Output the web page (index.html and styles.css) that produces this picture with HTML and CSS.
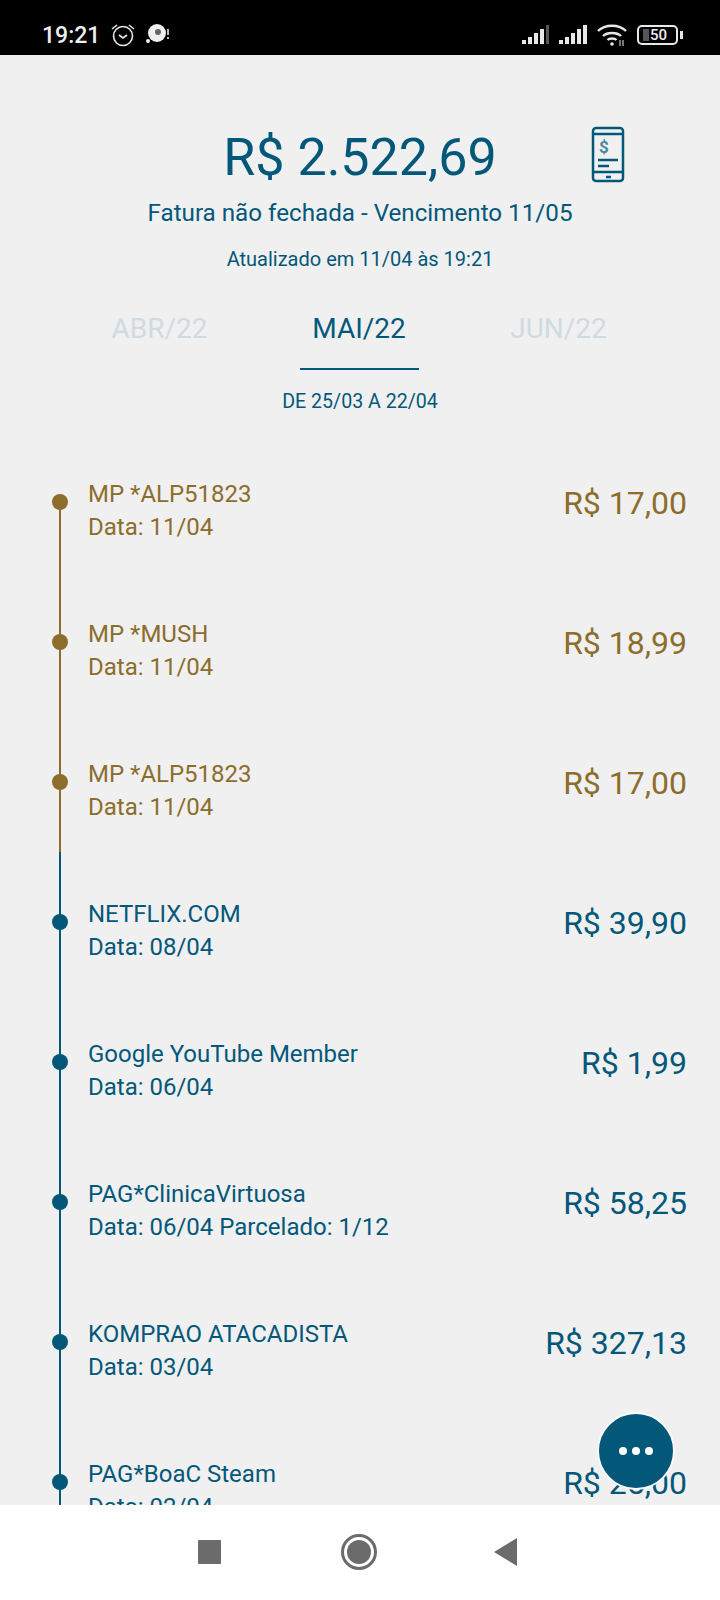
FILE: index.html
```html
<!DOCTYPE html>
<html>
<head>
    <title>Fatura</title>
    <meta name="viewport" content="width=device-width, initial-scale=1.0">
    <link rel="stylesheet" href="styles.css">
</head>
<body>
    <div class="status-bar">
        <div class="status-left">
            <span class="clock">19:21</span>
            <svg class="ico-alarm" width="24" height="26" viewBox="0 0 24 26" fill="none" stroke="#e8e8e8" stroke-width="1.6">
                <circle cx="12" cy="14" r="9.500"/>
                <path d="M8 13l4 3 4-3"/>
                <path d="M1 7l5-4M23 7l-5-4"/>
            </svg>
            <svg class="ico-disc" width="26" height="24" viewBox="0 0 26 24">
                <circle cx="12" cy="10" r="9" fill="#f0f0f0"/>
                <circle cx="13" cy="9" r="3" fill="#666"/>
                <circle cx="3" cy="18" r="2" fill="#f0f0f0"/>
                <path d="M22 6h2v6h-2zM22 14h2v2h-2z" fill="#bbb"/>
            </svg>
        </div>
        <div class="status-right">
            <svg width="28" height="20" viewBox="0 0 28 20" fill="#e8e8e8">
                <rect x="0" y="15" width="4" height="4"/><rect x="6" y="12" width="4" height="7"/><rect x="12" y="8" width="4" height="11"/><rect x="18" y="4" width="4" height="15"/><rect x="24" y="0" width="3" height="19" fill="#555"/>
            </svg>
            <svg width="29" height="20" viewBox="0 0 29 20" fill="#e8e8e8">
                <rect x="0" y="15" width="4" height="4"/><rect x="6" y="12" width="4" height="7"/><rect x="12" y="8" width="4" height="11"/><rect x="18" y="4" width="4" height="15"/><rect x="24" y="0" width="4" height="19"/>
            </svg>
            <svg width="30" height="22" viewBox="0 0 30 22" fill="none" stroke="#e8e8e8" stroke-width="2.4">
                <path d="M1 7c7-7 21-7 28 0"/>
                <path d="M6 12c4-4 14-4 18 0"/>
                <path d="M10.500 16c2-2 7-2 9 0"/>
                <circle cx="15" cy="20" r="1.800" fill="#e8e8e8" stroke="none"/>
                <path d="M23 16v6M26 16v6" stroke="#aaa" stroke-width="1.400"/>
            </svg>
            <div class="battery">
                <div class="battery-body"><span class="battery-fill"></span><span class="battery-num">50</span></div>
                <span class="battery-tip"></span>
            </div>
        </div>
    </div>

    <div class="main">
        <div class="resumo">
            <div class="total-linha">
                <span class="total">R$ 2.522,69</span>
                <svg class="ico-fatura" width="34" height="57" viewBox="0 0 34 57" fill="none" stroke="#03587a" stroke-width="2.500">
                    <rect x="2" y="2" width="30" height="53" rx="3"/>
                    <path d="M2 8h30M2 46h30"/>
                    <path d="M15 51h5"/>
                    <path d="M7 34h20M7 40h11"/>
                    <text x="13" y="27" class="ico-cifrao">$</text>
                </svg>
            </div>
            <div class="vencimento">Fatura não fechada - Vencimento 11/05</div>
            <div class="atualizado">Atualizado em 11/04 às 19:21</div>
        </div>

        <div class="meses">
            <div class="mes">ABR/22</div>
            <div class="mes ativo">MAI/22</div>
            <div class="mes">JUN/22</div>
        </div>
        <div class="periodo">DE 25/03 A 22/04</div>

        <div class="lista">
            <div class="item aberto primeiro">
                <div class="trilho"><span class="ponto"></span></div>
                <div class="info"><div>MP *ALP51823</div><div>Data: 11/04</div></div>
                <div class="valor">R$ 17,00</div>
            </div>
            <div class="item aberto">
                <div class="trilho"><span class="ponto"></span></div>
                <div class="info"><div>MP *MUSH</div><div>Data: 11/04</div></div>
                <div class="valor">R$ 18,99</div>
            </div>
            <div class="item aberto">
                <div class="trilho"><span class="ponto"></span></div>
                <div class="info"><div>MP *ALP51823</div><div>Data: 11/04</div></div>
                <div class="valor">R$ 17,00</div>
            </div>
            <div class="item">
                <div class="trilho"><span class="ponto"></span></div>
                <div class="info"><div>NETFLIX.COM</div><div>Data: 08/04</div></div>
                <div class="valor">R$ 39,90</div>
            </div>
            <div class="item">
                <div class="trilho"><span class="ponto"></span></div>
                <div class="info"><div>Google YouTube Member</div><div>Data: 06/04</div></div>
                <div class="valor">R$ 1,99</div>
            </div>
            <div class="item">
                <div class="trilho"><span class="ponto"></span></div>
                <div class="info"><div>PAG*ClinicaVirtuosa</div><div>Data: 06/04 Parcelado: 1/12</div></div>
                <div class="valor">R$ 58,25</div>
            </div>
            <div class="item">
                <div class="trilho"><span class="ponto"></span></div>
                <div class="info"><div>KOMPRAO ATACADISTA</div><div>Data: 03/04</div></div>
                <div class="valor">R$ 327,13</div>
            </div>
            <div class="item">
                <div class="trilho"><span class="ponto"></span></div>
                <div class="info"><div>PAG*BoaC Steam</div><div>Data: 02/04</div></div>
                <div class="valor">R$ 25,00</div>
            </div>
        </div>

        <button class="fab"><span></span><span></span><span></span></button>
    </div>

    <div class="nav-bar">
        <span class="nav-quadrado"></span>
        <span class="nav-circulo"><span></span></span>
        <span class="nav-voltar"></span>
    </div>
</body>
</html>
```

FILE: styles.css
```css
* {
    box-sizing: border-box;
}
body {
    font-family: Roboto, 'Liberation Sans', Arial, sans-serif;
    margin: 0;
    width: 720px;
    height: 1600px;
    display: flex;
    flex-direction: column;
    overflow: hidden;
    background-color: #f0f0f0;
    color: #03587a;
}

/* barra de status */
.status-bar {
    height: 55px;
    flex: none;
    background: #000;
    color: #eee;
    display: flex;
    justify-content: space-between;
    align-items: center;
    padding: 15px 37px 0 42px;
}
.status-left, .status-right {
    display: flex;
    align-items: center;
}
.clock {
    font-size: 23px;
    font-weight: 500;
    margin-right: 11px;
}
.ico-alarm {
    margin-right: 10px;
}
.status-right {
    gap: 9px;
}
.battery {
    display: flex;
    align-items: center;
    gap: 2px;
    margin-left: 1px;
}
.battery-body {
    width: 41px;
    height: 20px;
    border: 2px solid #e8e8e8;
    border-radius: 5px;
    display: flex;
    align-items: center;
    justify-content: center;
    overflow: hidden;
}
.battery-fill {
    width: 6px;
    height: 12px;
    background: #555;
    margin-right: 1px;
}
.battery-num {
    font-size: 15px;
    font-weight: 500;
    margin-right: 5px;
}
.battery-tip {
    width: 3px;
    height: 8px;
    background: #e8e8e8;
}

.main {
    flex: 1;
    position: relative;
    overflow: hidden;
}

/* resumo da fatura */
.resumo {
    text-align: center;
    padding-top: 70px;
}
.total-linha {
    position: relative;
    height: 66px;
}
.total {
    font-size: 52px;
    line-height: 66px;
}
.ico-fatura {
    position: absolute;
    left: 591px;
    top: 1px;
}
.ico-cifrao {
    font-size: 17px;
    font-weight: 700;
    text-anchor: middle;
    fill: #4d87a0;
    stroke: none;
}
.vencimento {
    font-size: 24.2px;
    line-height: 30px;
    margin-top: 7px;
}
.atualizado {
    font-size: 20px;
    line-height: 24px;
    margin-top: 19px;
}

/* abas dos meses */
.meses {
    display: flex;
    justify-content: center;
    margin-top: 37px;
    padding-right: 2px;
}
.mes {
    width: 200px;
    height: 62px;
    font-size: 28px;
    line-height: 42px;
    text-align: center;
    color: #cfdbe2;
}
.mes.ativo {
    color: #03587a;
    width: 119px;
    margin: 0 40px;
    border-bottom: 2px solid #03587a;
}
.periodo {
    text-align: center;
    font-size: 19.6px;
    line-height: 24px;
    margin-top: 20px;
}

/* lista de lancamentos */
.lista {
    margin-top: 18px;
}
.item {
    height: 140px;
    display: flex;
    align-items: center;
    padding: 0 33px 0 51px;
}
.item.aberto {
    color: #8c6d2c;
}
.trilho {
    align-self: stretch;
    width: 17px;
    margin-right: 20px;
    display: flex;
    align-items: center;
    justify-content: center;
    position: relative;
}
.trilho::before {
    content: "";
    position: absolute;
    left: 8px;
    top: 0;
    bottom: 0;
    width: 2px;
    background: currentColor;
}
.primeiro .trilho::before {
    top: 50%;
}
.ponto {
    width: 16px;
    height: 16px;
    border-radius: 50%;
    background: currentColor;
    position: relative;
}
.info {
    flex: 1;
    font-size: 24px;
    line-height: 33px;
    padding-top: 18px;
}
.valor {
    font-size: 32px;
    margin-top: 1px;
}

/* botao flutuante */
.fab {
    position: absolute;
    left: 597px;
    top: 1357px;
    width: 78px;
    height: 78px;
    border-radius: 50%;
    border: 2px solid #fafafa;
    background: #03587a;
    display: flex;
    align-items: center;
    justify-content: center;
    gap: 5px;
    padding: 0;
}
.fab span {
    width: 8px;
    height: 8px;
    border-radius: 50%;
    background: #fff;
}

/* barra de navegacao */
.nav-bar {
    height: 95px;
    flex: none;
    background: #fff;
    display: flex;
    align-items: center;
    justify-content: center;
    position: relative;
    z-index: 1;
    padding: 0 6px 2px 0;
}
.nav-quadrado {
    width: 23px;
    height: 24px;
    border-radius: 1px;
    background: #6b6b6b;
}
.nav-circulo {
    width: 36px;
    height: 36px;
    margin: 0 117px 0 120px;
    border: 3px solid #6b6b6b;
    border-radius: 50%;
    display: flex;
    align-items: center;
    justify-content: center;
}
.nav-circulo span {
    width: 24px;
    height: 24px;
    border-radius: 50%;
    background: #6b6b6b;
}
.nav-voltar {
    width: 0;
    height: 0;
    border-top: 14px solid transparent;
    border-bottom: 14px solid transparent;
    border-right: 23px solid #6b6b6b;
}
```
